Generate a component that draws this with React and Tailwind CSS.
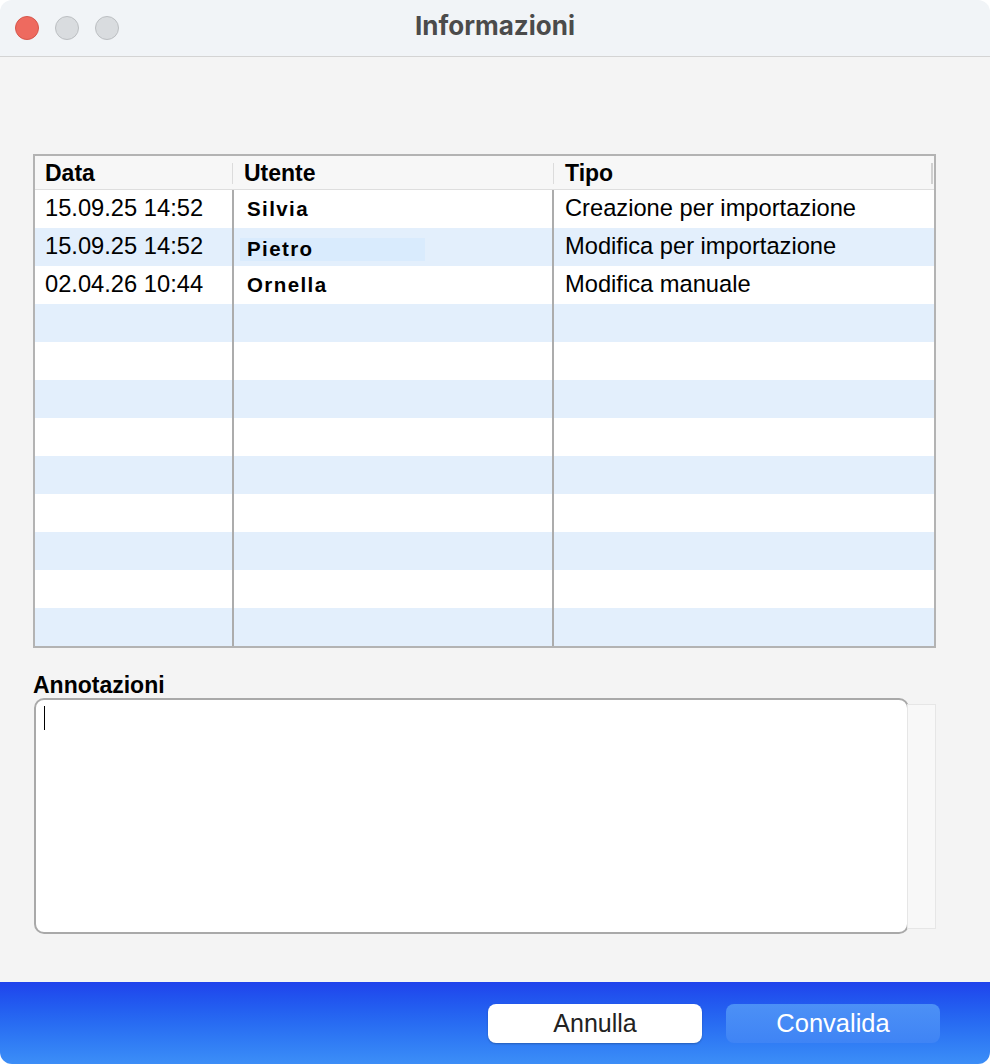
import React from "react";

const rows = [
  { d: "15.09.25 14:52", u: "Silvia", t: "Creazione per importazione" },
  { d: "15.09.25 14:52", u: "Pietro", t: "Modifica per importazione", hl: true },
  { d: "02.04.26 10:44", u: "Ornella", t: "Modifica manuale" },
];

export default function App() {
  const all = Array.from({ length: 12 }, (_, i) => rows[i] || null);
  return (
    <div
      className="w-[990px] h-[1064px] bg-white"
      style={{ fontFamily: '"Liberation Sans", Arial, sans-serif' }}
    >
      <div className="w-full h-full rounded-[12px] overflow-hidden flex flex-col">
        {/* Title bar */}
        <div className="h-[57px] shrink-0 bg-[#f1f4f7] border-b border-[#d4d4d4] grid grid-cols-[1fr_auto_1fr] items-center">
          <div className="flex items-center gap-[16px] pl-[15px]">
            <span className="w-[24px] h-[24px] rounded-full bg-[#ee6a5f] border border-[#d6564b]" />
            <span className="w-[24px] h-[24px] rounded-full bg-[#d9dcdf] border border-[#bcbfc2]" />
            <span className="w-[24px] h-[24px] rounded-full bg-[#d9dcdf] border border-[#bcbfc2]" />
          </div>
          <div
            className="text-[26px] font-bold text-[#4b4b4b] pb-[6px]"
            style={{ fontFamily: 'Inter, "Liberation Sans", sans-serif' }}
          >
            Informazioni
          </div>
          <div />
        </div>

        {/* Body */}
        <div className="flex-1 bg-[#f4f4f4] pl-[33px] pr-[54px] pt-[97px] flex flex-col">
          <div className="border-2 border-[#b3b3b3] bg-white">
            {/* Header */}
            <div className="h-[34px] bg-[#f7f7f7] border-b border-[#dedede] grid grid-cols-[199px_320px_1fr] text-[23px] font-bold text-black">
              <div className="flex items-center justify-between">
                <span className="pl-[10px]">Data</span>
                <span className="w-[1px] h-[21px] bg-[#dcdcdc] mr-[1px]" />
              </div>
              <div className="flex items-center justify-between">
                <span className="pl-[10px]">Utente</span>
                <span className="w-[1px] h-[21px] bg-[#dcdcdc]" />
              </div>
              <div className="flex items-center justify-between">
                <span className="pl-[11px]">Tipo</span>
                <span className="w-[2px] h-[21px] bg-[#d0d0d0] mr-[1px]" />
              </div>
            </div>
            {/* Rows */}
            {all.map((r, i) => (
              <div
                key={i}
                className={
                  "h-[38px] grid grid-cols-[199px_320px_1fr] text-[23.7px] text-black " +
                  (i % 2 === 1 ? "bg-[#e3effc]" : "bg-white")
                }
              >
                <div className="border-r-2 border-[#acacac] flex items-center pl-[10px] pb-[1px]">
                  {r ? r.d : ""}
                </div>
                <div className="border-r-2 border-[#acacac] flex items-center pl-[6px]">
                  {r ? (
                    <span
                      className={
                        "h-[23px] flex items-center pl-[7px] text-[20.5px] font-bold tracking-[1.4px] " +
                        (r.hl ? "bg-[#d9ebfd] w-[185px] mt-[4px]" : "")
                      }
                    >
                      {r.u}
                    </span>
                  ) : null}
                </div>
                <div className="flex items-center pl-[11px] pb-[1px]">{r ? r.t : ""}</div>
              </div>
            ))}
          </div>

          <div className="mt-[24px] text-[23px] font-bold text-black leading-[27px]">
            Annotazioni
          </div>
          <div className="flex items-center -mt-[1px] pl-[1px]">
            <div className="w-[876px] h-[236px] bg-white border-2 border-[#a9a9a9] rounded-[10px] pl-[8px] pt-[6px]">
              <span className="block w-[1px] h-[24px] bg-black" />
            </div>
            <div className="w-[29px] h-[225px] bg-[#f8f8f8] border border-[#e6e6e6] -ml-[2px]" />
          </div>
        </div>

        {/* Footer */}
        <div className="h-[82px] shrink-0 bg-gradient-to-b from-[#2042ec] to-[#3c8ef7] flex justify-end items-start pt-[22px] pr-[50px] gap-[24px]">
          <button className="w-[214px] h-[39px] bg-white rounded-[8px] text-[25px] text-[#222] shadow-[0_1px_2px_rgba(0,0,0,0.25)] flex items-center justify-center">
            Annulla
          </button>
          <button className="w-[214px] h-[39px] bg-gradient-to-b from-[#4c90f6] to-[#3f84f5] rounded-[8px] text-[25.5px] text-white flex items-center justify-center">
            Convalida
          </button>
        </div>
      </div>
    </div>
  );
}
